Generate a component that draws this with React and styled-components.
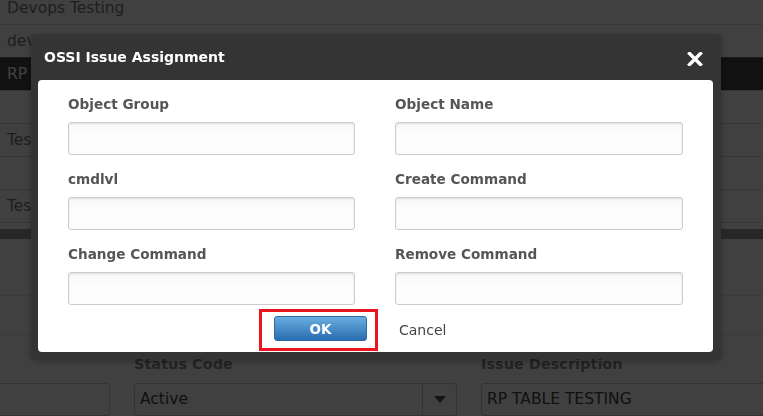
import styled, { createGlobalStyle } from "styled-components";

const GlobalStyle = createGlobalStyle`
  html, body {
    margin: 0;
    padding: 0;
    background: #ffffff;
    overflow: hidden;
    font-family: "DejaVu Sans", Verdana, sans-serif;
  }
`;

const rows = [
  { text: "Devops Testing" },
  { text: "devops" },
  { text: "RP TABLE TESTING", selected: true },
  { text: "" },
  { text: "Testing" },
  { text: "" },
  { text: "Testing" },
];

const fields = [
  "Object Group",
  "Object Name",
  "cmdlvl",
  "Create Command",
  "Change Command",
  "Remove Command",
];

export default function App() {
  return (
    <>
      <GlobalStyle />
      <Page>
        <Table>
          {rows.map((row, i) => (
            <Row key={i} $selected={row.selected}>
              {row.text}
            </Row>
          ))}
        </Table>
        <Divider />
        <FormArea>
          <FormLine $h={57} />
          <FormLine $h={39} />
          <FieldGrid>
            <Field>
              <FieldLabel />
              <PageInput />
            </Field>
            <Field>
              <FieldLabel>Status Code</FieldLabel>
              <SelectBox>
                <span>Active</span>
                <SelectArrow>
                  <svg width="12" height="7" viewBox="0 0 12 7">
                    <path d="M0 0 L12 0 L6 7 Z" fill="#555" />
                  </svg>
                </SelectArrow>
              </SelectBox>
            </Field>
            <Field>
              <FieldLabel>Issue Description</FieldLabel>
              <PageInput>RP TABLE TESTING</PageInput>
            </Field>
          </FieldGrid>
        </FormArea>
      </Page>

      <Overlay />

      <Dialog>
        <TitleBar>
          <Title>OSSI Issue Assignment</Title>
          <CloseButton aria-label="close">
            <svg width="16" height="14" viewBox="0 0 16 14">
              <path
                d="M2.5 1.5 L13.5 12.5 M13.5 1.5 L2.5 12.5"
                stroke="#fff"
                strokeWidth="3.4"
                strokeLinecap="square"
              />
            </svg>
          </CloseButton>
        </TitleBar>
        <Content>
          <Grid>
            {fields.map((f) => (
              <div key={f}>
                <Label>{f}</Label>
                <TextInput type="text" />
              </div>
            ))}
          </Grid>
          <Actions>
            <Highlight>
              <OkButton>OK</OkButton>
            </Highlight>
            <CancelLink>Cancel</CancelLink>
          </Actions>
        </Content>
      </Dialog>
    </>
  );
}

const Page = styled.div`
  width: 763px;
  height: 416px;
  overflow: hidden;
  background: #ffffff;
`;

const Table = styled.div`
  margin-top: -8px;
`;

const Row = styled.div`
  height: 32px;
  line-height: 32px;
  padding-left: 7px;
  font-size: 15.5px;
  color: ${(p) => (p.$selected ? "#ffffff" : "#7a7a7a")};
  background: ${(p) => (p.$selected ? "#444444" : "#ffffff")};
  border-bottom: 1px solid #dadada;
  border-top: ${(p) => (p.$selected ? "1px dotted #888" : "0")};
  margin-top: ${(p) => (p.$selected ? "-1px" : "0")};
  white-space: nowrap;
`;

const Divider = styled.div`
  height: 10px;
  margin-top: 6px;
  background: #9a9a9a;
`;

const FormArea = styled.div``;

const FormLine = styled.div`
  height: ${(p) => p.$h - 1}px;
  border-bottom: 1px solid #e6e6e6;
`;

const FieldGrid = styled.div`
  display: grid;
  grid-template-columns: 323px 323px 323px;
  column-gap: 24px;
  margin-left: -213px;
  padding-top: 20px;
`;

const Field = styled.div``;

const FieldLabel = styled.div`
  font-weight: bold;
  font-size: 14.5px;
  color: #8a8a8a;
  height: 19px;
  line-height: 19px;
  margin-bottom: 9px;
`;

const PageInput = styled.div`
  height: 33px;
  box-sizing: border-box;
  border: 1px solid #cccccc;
  border-radius: 3px;
  padding-left: 5px;
  line-height: 31px;
  font-size: 15.5px;
  color: #444;
`;

const SelectBox = styled(PageInput)`
  display: flex;
  justify-content: space-between;
  padding-right: 0;
`;

const SelectArrow = styled.div`
  width: 33px;
  border-left: 1px solid #cccccc;
  display: flex;
  align-items: center;
  justify-content: center;
`;

const Overlay = styled.div`
  position: fixed;
  inset: 0;
  background: rgba(0, 0, 0, 0.75);
`;

const Dialog = styled.div`
  position: fixed;
  left: 31px;
  top: 34px;
  width: 690px;
  height: 325px;
  box-sizing: border-box;
  background: #343434;
  border-radius: 4px;
  padding: 0 8px 7px 7px;
  display: flex;
  flex-direction: column;
  box-shadow: 0 2px 6px rgba(0, 0, 0, 0.3);
`;

const TitleBar = styled.div`
  height: 46px;
  display: flex;
  align-items: center;
  justify-content: space-between;
  padding: 0 10px 0 6px;
`;

const Title = styled.h2`
  margin: 0;
  font-size: 14px;
  font-weight: bold;
  color: #ffffff;
`;

const CloseButton = styled.button`
  border: 0;
  background: none;
  padding: 0;
  display: flex;
  margin-top: 3px;
  cursor: pointer;
`;

const Content = styled.div`
  flex: 1;
  background: #ffffff;
  border-radius: 4px;
  padding: 14px 30px 0 30px;
  display: flex;
  flex-direction: column;
`;

const Grid = styled.div`
  display: grid;
  grid-template-columns: 287px 288px;
  column-gap: 40px;
  row-gap: 14px;
`;

const Label = styled.div`
  font-size: 13.6px;
  font-weight: bold;
  color: #555555;
  height: 20px;
  line-height: 20px;
  margin-bottom: 8px;
`;

const TextInput = styled.input`
  display: block;
  width: 100%;
  height: 33px;
  box-sizing: border-box;
  border: 1px solid #cccccc;
  border-radius: 3px;
  background: linear-gradient(#f7f7f7, #fdfdfd 40%);
  box-shadow: inset 0 1px 2px rgba(0, 0, 0, 0.1);
  outline: none;
`;

const Actions = styled.div`
  display: flex;
  align-items: center;
  margin-top: 4px;
  padding-left: 191px;
  gap: 21px;
`;

const Highlight = styled.div`
  border: 3px solid #e8161e;
  padding: 4px 8px 7px 12px;
  display: flex;
`;

const OkButton = styled.button`
  width: 93px;
  height: 25px;
  border: 1px solid #2b6aa6;
  border-radius: 3px;
  background: linear-gradient(#69ade0, #2a6db0);
  color: #ffffff;
  font-family: "DejaVu Sans", Verdana, sans-serif;
  font-size: 13.5px;
  font-weight: bold;
  padding: 0;
  cursor: pointer;
`;

const CancelLink = styled.span`
  font-size: 14px;
  color: #444444;
  cursor: pointer;
`;
